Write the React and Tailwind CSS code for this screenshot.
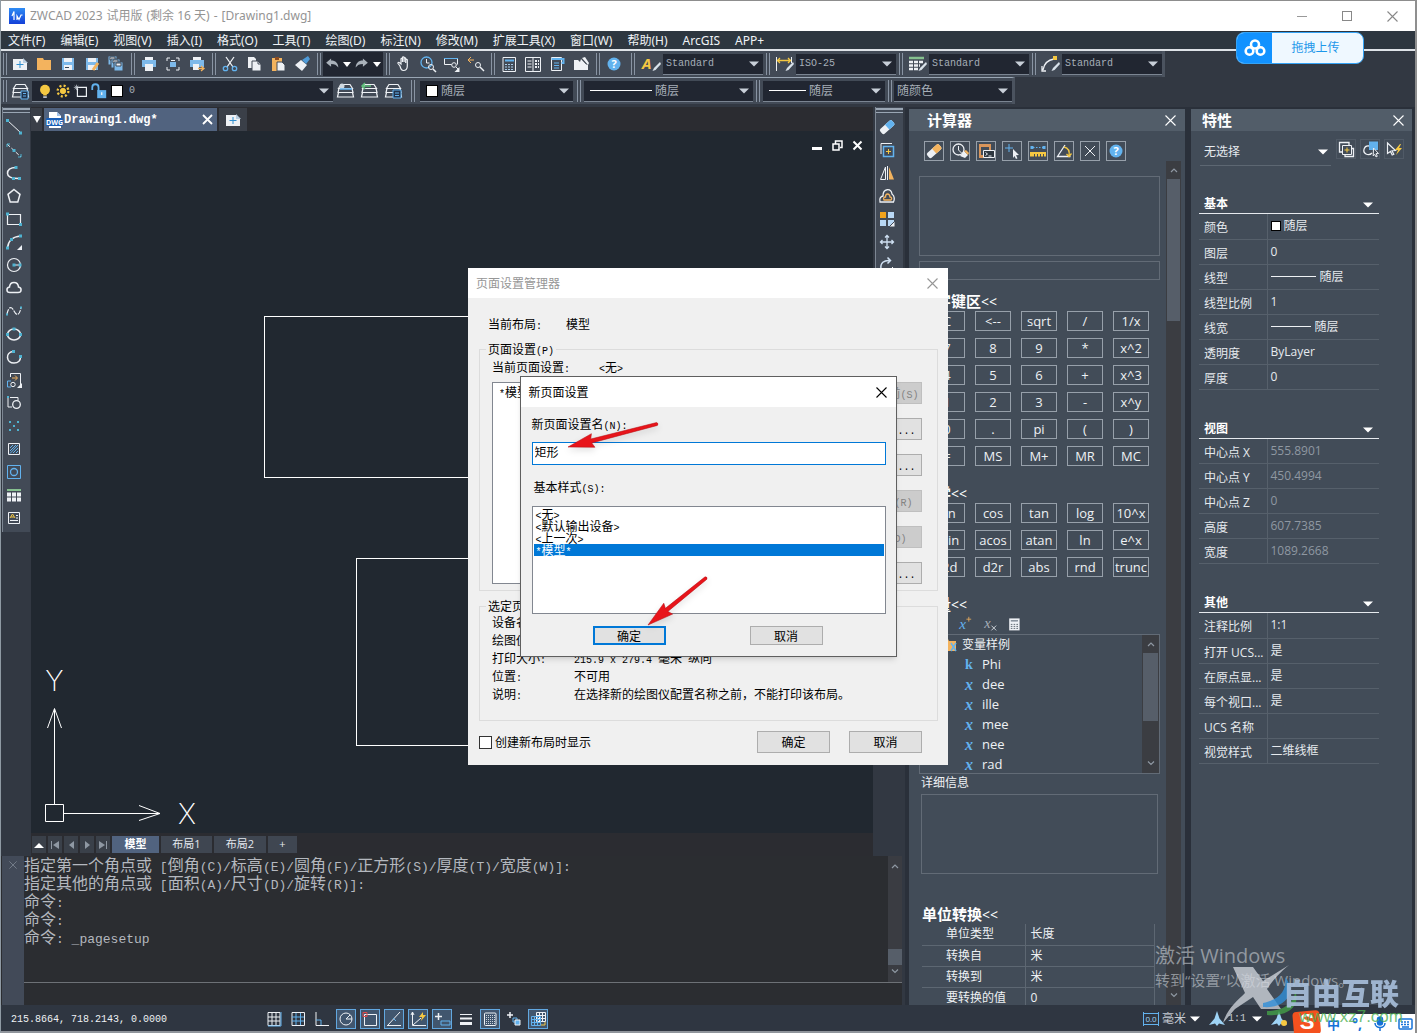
import React from "react";

/* ---------- shared helpers ---------- */

const W = "#eef1f5";
const B = "#62b2ee";
const C = "#4fb3d1";
const O = "#f3b35e";
const Y = "#f5c842";

function Icon({ children, s = 20, className = "" }) {
  return (
    <svg width={s} height={s} viewBox="0 0 20 20" fill="none" stroke={W} strokeWidth="1" className={"block shrink-0 " + className} aria-hidden="true">
      {children}
    </svg>
  );
}

function Tool({ icon, label, className = "w-6 h-6" }) {
  return (
    <button type="button" aria-label={label} className={"flex shrink-0 items-center justify-center " + className}>
      <Icon>{icon}</Icon>
    </button>
  );
}

/* Sets Latin runs in a narrow monospace beside the Chinese text. */
const LATIN = {
  sm: "font-['Liberation_Mono',monospace] text-[10px] leading-none",
  lg: "font-['Liberation_Mono',monospace] text-[13px] leading-none",
};
function T({ children, size = "sm" }) {
  return String(children)
    .split(/([\x20-\x7e]+)/)
    .filter(Boolean)
    .map((part, i) =>
      /^[\x20-\x7e]/.test(part) ? (
        <span key={i} className={"whitespace-pre " + LATIN[size]}>{part}</span>
      ) : (
        <span key={i}>{part}</span>
      )
    );
}

function Caret({ className = "text-[#dfe6ee]" }) {
  return (
    <svg width="10" height="6" viewBox="0 0 10 6" className={"block shrink-0 " + className} aria-hidden="true">
      <path d="M0 0.500H10L5 5.500Z" fill="currentColor" />
    </svg>
  );
}

function Close({ s = 11, className = "" }) {
  return (
    <svg width={s} height={s} viewBox="0 0 11 11" className={"block " + className} stroke="currentColor" strokeWidth="1.100" aria-hidden="true">
      <path d="M0.500 0.500L10.500 10.500M10.500 0.500L0.500 10.500" />
    </svg>
  );
}

const dots = (pts, c = C, r = 1.5) => pts.map(([x, y], i) => <rect key={i} x={x - r} y={y - r} width={r * 2} height={r * 2} fill={c} stroke="none" />);

/* ---------- icons ---------- */

const magnifier = <g><circle cx="13" cy="13" r="2.500" /><path d="M15 15l3 3" strokeWidth="1.500" /></g>;
const stack = <path d="M6 3.500h9l2.500 4h-14zM4 7.500l-1 4h15l-1-4M3.500 11.500l-1 4.500h16l-1-4.500" strokeWidth="1.200" />;
const pen = <path d="M19 8l-6 6-1.500 3 3-1L20 10z" fill="#d9e2ea" stroke="none" />;

const I = {
  newDoc: <g><path d="M3 5h10l4 4v7H3z" fill={W} stroke="none" /><path d="M13 4v5h5z" fill="#b8cde0" stroke="none" /><path d="M10 7v7M6.500 10.500h7" stroke="#2f8fd0" /></g>,
  open: <path d="M3 4h6l1 2h7v10H3z" fill={O} stroke="none" />,
  save: <g><path d="M4 4h12v12H4z" fill="#7db9ea" stroke="none" /><path d="M6 4h8v4H6zM6 11h8v5H6z" fill={W} stroke="none" /><path d="M7 13.500h4" stroke="#345" /></g>,
  saveAs: <g><path d="M4 4h12v12H4z" fill="#7db9ea" stroke="none" /><path d="M6 4h8v4H6zM6 11h8v5H6z" fill={W} stroke="none" /><path d="M16 9l-5 7" stroke={O} strokeWidth="3" /></g>,
  saveAll: <g stroke="#424a56">{[[2, 2], [5, 5], [8, 8]].map(([x, y]) => <g key={x}><path d={`M${x} ${y}h9v9h-9z`} fill="#7db9ea" /><path d={`M${x + 2} ${y + 1}h5v3h-5z`} fill={W} /></g>)}</g>,
  print: <g stroke="none"><path d="M6 3h8v4H6z" fill={W} /><path d="M3 6h14v7H3z" fill="#7db9ea" /><path d="M6 10h8v7H6z" fill={W} /></g>,
  preview: <g><path d="M4 7V4h3M13 4h3v3M16 13v3h-3M7 16H4v-3" /><path d="M7 8h6v5H7z" fill="#7db9ea" stroke="none" /><path d="M8 6.500h4" /></g>,
  publish: <g stroke="none"><path d="M6 3h8v4H6z" fill={W} /><path d="M3 6h14v7H3z" fill="#7db9ea" /><path d="M6 10h6v6H6z" fill={W} /><path d="M11 14.500h5M14 12l3 2.500-3 2.500" stroke={O} strokeWidth="1.300" /></g>,
  cut: <g strokeWidth="1.300"><path d="M6 3l7 10M14 3L7 13" stroke={W} /><circle cx="5.500" cy="14.500" r="2.200" stroke={B} /><circle cx="14.500" cy="14.500" r="2.200" stroke={B} /></g>,
  copy: <g><path d="M4 3h6l2 2v9H4z" fill={W} stroke="none" /><path d="M8 7h6l3 3v7H8z" fill={W} stroke="#424a56" /><path d="M14 7v3h3" stroke="#424a56" /></g>,
  paste: <g><path d="M4 4h10v13H4z" fill={O} stroke="none" /><path d="M7 3h4v3H7z" fill="#8a4b22" stroke="none" /><path d="M9 8h5l3 3v6H9z" fill={W} stroke="#424a56" /></g>,
  brush: <g stroke="none"><path d="M3 11l6-5 6 5-5 6z" fill={W} /><path d="M10 6l6-4 2 3-4 5z" fill="#4f9bd8" /></g>,
  undo: <path d="M9 4L3.500 8.500 9 13v-3c4 0 6 1 8 4 0-5-3-8-8-8z" fill="#aab2bb" stroke="none" />,
  redo: <path d="M11 4l5.500 4.500L11 13v-3c-4 0-6 1-8 4 0-5 3-8 8-8z" fill="#aab2bb" stroke="none" />,
  pan: <path d="M6 12L4 9.500c-.5-1 .8-1.600 1.500-.8L7 10V5c0-1 1.500-1 1.500 0v3-4.500c0-1 1.600-1 1.600 0V8 4.500c0-1 1.600-1 1.600 0V9 6c0-1 1.600-1 1.600 0v6c0 3-1.500 4.500-4 4.500S7 15 6 12z" strokeWidth="1.200" />,
  zoomRt: <g><circle cx="8.500" cy="8.500" r="5.500" stroke={B} strokeWidth="1.300" /><path d="M8.500 5v4h3" />{magnifier}</g>,
  zoomWin: <g><path d="M2.500 4.500h13v6M2.500 4.500v6h7" /><path d="M2 4.500h14" stroke={B} /><circle cx="12" cy="11" r="2.300" /><path d="M14 13l2 2" /><path d="M17.500 13v5h-5z" fill={W} stroke="none" /></g>,
  zoomPrev: <g><path d="M2 6h6M5 3L2 6l3 3" stroke={O} /><circle cx="12" cy="11" r="2.500" /><path d="M14 13l4 4" strokeWidth="1.400" /></g>,
  calc: <g><path d="M4 3.500h12.500v14H4z" /><path d="M6 6.500h9" stroke={B} strokeWidth="2" /><path d="M6 10.500h9M6 13h9M6 15.500h9" stroke="#a9cdea" strokeDasharray="2 1" /></g>,
  designCtr: <g><path d="M2.500 3.500h15v14h-15zM10 3.500v14" /><path d="M4.500 7h4M4.500 10h4M4.500 13h4" /><path d="M12 7h4M12 10h4M12 13h4" strokeDasharray="2 1" strokeWidth="2" /></g>,
  toolPal: <g><path d="M4.500 3.500h10v13h-10z" /><path d="M4.500 5h12v4h-2" stroke={B} strokeWidth="2" /><path d="M7 9h5M7 11.500h5M7 14h5" stroke={B} /></g>,
  eraseDoc: <g stroke="none"><path d="M3 6h4l2 2 1-3 5 5 2 1v5H3z" fill={W} /><path d="M11 4l3-1 4 6-1 2z" fill={W} /><path d="M10.500 4.500l5 6" stroke="#424a56" strokeWidth=".8" /></g>,
  help: <g><circle cx="10" cy="10" r="6.500" fill={B} stroke="none" /><text x="10" y="14" textAnchor="middle" fontSize="11" fontWeight="bold" fill="#fff" stroke="none">?</text></g>,
  textStyle: <g><text x="1" y="15" fontSize="15" fontWeight="bold" fontStyle="italic" fill={Y} stroke="none">A</text>{pen}</g>,
  dimStyle: <g><path d="M2.500 3v14M17.500 3v6" /><path d="M3 6.500h14M6 4L3.500 6.500 6 9M14 4l2.500 2.500L14 9" stroke={Y} strokeWidth="1.300" />{pen}</g>,
  tableStyle: <g><path d="M2 4h15" stroke="#86c08f" strokeWidth="2.500" /><path d="M2 8h14M2 11.500h11M2 15h9" stroke={W} strokeWidth="2.500" strokeDasharray="4 1" />{pen}</g>,
  leaderStyle: <g><path d="M3 16c1-6 4-10 11-11M2 12v5h4" strokeWidth="1.300" /><path d="M13 2h4v4h-4z" fill={Y} stroke="none" />{pen}</g>,
  layers: <g>{stack}<path d="M11 10h7v8h-7z" fill="#23334a" stroke={B} /><path d="M13 12.500h3M13 15h3" stroke={B} /></g>,
  bulb: <g stroke="none"><circle cx="10" cy="8.500" r="5.500" fill={Y} /><path d="M8 13h4v2H8z" fill={Y} /><path d="M8 16h4v1.500H8z" fill={W} /></g>,
  sun: <g stroke={Y}><circle cx="10" cy="10" r="3" fill={Y} /><circle cx="10" cy="10" r="6" strokeWidth="2.500" strokeDasharray="2.300 2.400" /></g>,
  frame: <g><path d="M6 6h10v10H6z" strokeWidth="1.300" /><path d="M2 6h6M5 3v6M3 4l4 4M7 4L3 8" stroke="#c5ccd4" strokeWidth=".8" /></g>,
  lock: <g><path d="M8 9h10v9H8z" fill={B} stroke="none" /><path d="M9.500 10V6a3.500 3.500 0 00-7 0v3" stroke={B} strokeWidth="2" /><path d="M13 11.500v3" strokeWidth="1.500" /></g>,
  layA: <g>{stack}<circle cx="7" cy="5" r="2.500" fill="#cfd8e0" stroke="none" /><path d="M5 8h12" stroke={B} strokeWidth="1.500" /></g>,
  layB: <g>{stack}<path d="M3 5h9M6 2L3 5l3 3" stroke="#5ec07a" strokeWidth="1.500" /></g>,
  layC: <g>{stack}<path d="M10 9h8v8h-8z" fill="#23334a" stroke={B} /><path d="M12 12h4M12 14.500h4" stroke={B} /></g>,
  line: <g><path d="M3.500 3.500l13 12" />{dots([[3.500, 3.500], [16.500, 16]])}</g>,
  xline: <g><path d="M3 4l14 13" strokeDasharray="4 2" /><path d="M3 7V4h3M17 14v3h-3" stroke={C} />{dots([[10, 10.500]])}</g>,
  pline: <g><path d="M12 4.500C6 4.500 3.500 7 3.500 10.500S7 15.500 15 15.500" strokeWidth="1.500" />{dots([[12, 4.500], [9.500, 15.500], [15.500, 15.500]])}</g>,
  polygon: <path d="M10 3.500l6 4.800-2.200 7.700H6.200L4 8.300z" strokeWidth="1.500" />,
  rect: <g><path d="M3.500 5.500h13v10h-13z" strokeWidth="1.200" />{dots([[3.500, 5], [16.500, 15.500]])}</g>,
  arc: <g><path d="M3.500 16C4 9 9 4.500 16.500 4" strokeWidth="1.500" />{dots([[3.500, 16], [7.500, 7.500], [16.500, 4]])}<path d="M18 13v5h-5z" fill={W} stroke="none" /></g>,
  circle: <g><circle cx="10" cy="10" r="6.500" strokeWidth="1.200" /><path d="M10 10h6" />{dots([[10, 10], [16, 10]])}</g>,
  cloud: <path d="M6 14.500c-4 0-4-5-.5-5.500C6 3 14 3 14.500 9c3.500.5 3.500 5.500-.5 5.500z" strokeWidth="1.500" />,
  spline: <g><path d="M3 13c2-9 5-7 7-3s5 6 7-3" strokeWidth="1.200" strokeDasharray="5 1" />{dots([[3, 13.500], [17, 6.500]], C, 1)}</g>,
  ellipse: <g><ellipse cx="10" cy="10.500" rx="6.500" ry="5.500" strokeWidth="1.500" />{dots([[10, 5], [3.500, 10.500], [16.500, 10.500]])}</g>,
  ellArc: <g><path d="M9 4.500c-8 1-7 11.500 1 11.500 4.500 0 6.500-3 6.500-6" strokeWidth="1.500" />{dots([[9.500, 4.500], [16.500, 9.500]])}</g>,
  insert: <g><path d="M6.500 7V3.500h10v12" /><path d="M7 11H3.500v6H7" stroke={B} /><path d="M8 8h5M11 5.500L13.500 8 11 10.500" stroke={O} /><circle cx="9" cy="14.500" r="2.200" /><path d="M18 13v5h-5z" fill={W} stroke="none" /></g>,
  block: <g><path d="M4 5v9h4M6 4.500h8v3" /><circle cx="12.500" cy="11.500" r="3.800" strokeWidth="1.300" />{dots([[4, 4]], C, 1)}</g>,
  points: <g>{dots([[6, 6], [14, 6], [10, 10], [6, 14], [14, 14]], C, 1)}</g>,
  hatch: <g><path d="M4.500 4.500h11v11h-11z" /><path d="M6 9l3-3M6 12l6-6M6 14.500L14 6M9 14l5-5M12 14l2-2" stroke={B} /></g>,
  region: <g stroke={B}><path d="M3.500 3.500h13v13h-13z" /><circle cx="10" cy="10" r="3.500" strokeWidth="1.300" /></g>,
  table: <g><path d="M3 5h14" stroke="#86c08f" strokeWidth="2" /><path d="M3 9.500h14M3 14.500h14" strokeWidth="4" strokeDasharray="4 1" /></g>,
  mtext: <g><path d="M4.500 4.500h11v11h-11z" /><path d="M6 10l2.500-4L11 10M7 9h3" stroke={Y} /><path d="M12 7.500h2M12 10h2M6 12.500h8" /></g>,
  erase: <g stroke="none" transform="rotate(-42 10 10)"><rect x="2" y="7" width="16" height="6.500" rx="2" fill={W} /><path d="M10 7h6a2 2 0 012 2v2.500a2 2 0 01-2 2h-6z" fill={B} /></g>,
  eraseO: <g stroke="none" transform="rotate(-42 10 10)"><rect x="2" y="7" width="16" height="6.500" rx="2" fill={W} /><path d="M10 7h6a2 2 0 012 2v2.500a2 2 0 01-2 2h-6z" fill={O} /></g>,
  copyObj: <g><path d="M4 14V3.500h11" /><path d="M6.500 6.500h10v10h-10z" stroke={B} strokeWidth="1.500" /><path d="M11.500 9v5M9 11.500h5" stroke={Y} /></g>,
  mirror: <g><path d="M8.500 4v12.500H3.500z" /><path d="M10.500 3v14" /><path d="M12 4v12.500h5z" fill={O} stroke="none" /></g>,
  offset: <g strokeWidth="1.300"><path d="M3 16c-1-4 1-5.500 3-6 0-8 8-8 9-2 3 2 2.500 6 1.500 8z" /><path d="M7 14c-1-2 0-3 1.500-3 0-4 4-4 4.500 0 2 0 2 2 1 3z" stroke={O} /></g>,
  array: <g stroke="none"><path d="M3 3h6v6H3z" fill="#f2a31c" /><path d="M11 3h6v6h-6zM3 11h6v6H3zM11 11h6v6h-6z" fill="#b9d8f5" /><path d="M18 12v6h-6z" fill={W} stroke="#424a56" /></g>,
  move: <path d="M10 4v12M4 10h12M8 5.500L10 3.500l2 2M8 14.500l2 2 2-2M5.500 8l-2 2 2 2M14.500 8l2 2-2 2" stroke="#cfe0f2" strokeWidth="1.300" />,
  rotate: <g><path d="M4 14C3 8 7 5 13 5.500M10.500 2.500l3 3-3 3" strokeWidth="1.500" stroke="#cfe0f2" /><path d="M13 15l3-3" /></g>,
  history: <g><circle cx="8.500" cy="8.500" r="5.500" strokeWidth="1.300" /><path d="M8.500 5v4l3 3" /><path d="M10 15l4-5 4 4-3 3z" fill={W} stroke="none" /><path d="M14 10l4 4 1-2-3-3z" fill={O} stroke="none" /></g>,
  pasteCmd: <g><path d="M3 3h12v14H3z" fill="#d9955a" stroke="none" /><path d="M5 6h8v8H5z" fill="#424c58" stroke="none" /><path d="M7.500 9.500h11v7h-11z" fill="#2e3740" /><path d="M9.500 11.500l2 1.500-2 1.500M12.500 15h3" /></g>,
  pick: <g><path d="M3 7h8M7 3v8" stroke={B} /><path d="M11 8l6 6-3 .3 1.500 3-1.500.7-1.500-3-1.500 2z" fill={W} stroke="none" /></g>,
  dist: <g><path d="M5 6.500h10" stroke={B} strokeDasharray="1.500 1.500" />{dots([[4, 6.500], [16, 6.500]], B)}<path d="M2 15.500V11h16v4.500h-2V13h-1v2.500h-2V13h-1v2.500h-2V13H9v2.500H7V13H6v2.500z" fill={Y} stroke="none" /></g>,
  angle: <g><path d="M11 4L3.500 15.500h13" strokeWidth="1.300" /><path d="M10 6c4 1 6 4 5 9M12.500 13l2.500 2.500 2.500-3" stroke={Y} strokeWidth="1.300" /></g>,
  cross: <path d="M5 5l10 10M15 5L5 15" />,
  addSel: <g><path d="M6 13H3.500V3.500H13V6" strokeWidth="1.300" /><path d="M6.500 6.500h9v9h-9z" /><path d="M15 9.500h2.500v8H9V15" strokeWidth="1.300" /><path d="M11 8.500v5M8.500 11h5" stroke={Y} /></g>,
  selObj: <g><path d="M9 7c-5-1-7 6-3 8 2 1 4 1 6-1" strokeWidth="1.300" /><path d="M9 2.500h9V11H9z" fill={B} stroke="none" /><path d="M13.500 9l5 5.500-2.500.2 1.300 2.600-1.300.6-1.300-2.500-1.500 1.500z" fill="#424c58" /></g>,
  quick: <g><path d="M3.500 4l8 7.500-3.500.2 1.800 3.600-1.600.7-1.700-3.500-3 2z" strokeWidth="1.200" /><path d="M16 5l-5 6h3l-2 5 6-7h-3l2-4z" fill={Y} stroke="none" /></g>,
};

/* ---------- top bars ---------- */

const menus = ["文件(F)", "编辑(E)", "视图(V)", "插入(I)", "格式(O)", "工具(T)", "绘图(D)", "标注(N)", "修改(M)", "扩展工具(X)", "窗口(W)", "帮助(H)", "ArcGIS", "APP+"];

function TitleBar() {
  return (
    <header className="flex h-[31px] shrink-0 items-center border-t border-[#8d8d8d] bg-white pl-2 font-['Noto_Sans','Noto_Sans_CJK_SC',sans-serif] text-[#949494]">
      <svg width="16" height="16" viewBox="0 0 16 16" aria-hidden="true">
        <defs><linearGradient id="lg" x1="0" y1="0" x2="0" y2="1"><stop offset="0" stopColor="#2f8cf4" /><stop offset="1" stopColor="#1440d8" /></linearGradient></defs>
        <rect width="16" height="16" fill="url(#lg)" />
        <path d="M3 8l2-4.500 0 5.500M5 9v3M8 12V8l2 3.500L12 7h1.500" stroke="#fff" strokeWidth="1.200" fill="none" />
      </svg>
      <h1 className="ml-[5px] flex gap-1 text-xs"><span>ZWCAD 2023</span> <span>试用版</span> <span>(剩余 16 天)</span> <span>-</span> <span>[Drawing1.dwg]</span></h1>
      <div className="ml-auto flex">
        <button type="button" aria-label="最小化" className="flex h-7 w-[45px] items-center justify-center"><span className="h-px w-[10px] bg-[#999]" /></button>
        <button type="button" aria-label="最大化" className="flex h-7 w-[45px] items-center justify-center"><span className="size-[10px] border border-[#888]" /></button>
        <button type="button" aria-label="关闭" className="flex h-7 w-[46px] items-center justify-center text-[#888]"><Close /></button>
      </div>
    </header>
  );
}

function MenuBar() {
  return (
    <nav className="flex h-5 shrink-0 items-center gap-px border-b-2 border-[#dfe3e8] bg-[#2e3740] font-['Noto_Sans','Noto_Sans_CJK_SC',sans-serif] text-xs text-[#f0f3f6]">
      {menus.map((m) => (
        <button type="button" key={m} className="shrink-0 px-[7px] pt-[2px] leading-[18px]">{m}</button>
      ))}
    </nav>
  );
}

const Sep = ({ className = "w-[9px]" }) => (
  <span className={"flex shrink-0 items-stretch justify-center gap-[2px] self-stretch py-[2px] " + className}>
    <span className="w-px bg-[#8994a3]" />
    <span className="w-px bg-[#8994a3]" />
  </span>
);

function Combo({ label, text, className = "", before, mono }) {
  return (
    <div className={"flex h-[21px] shrink-0 items-center border-b border-[#7b8592] bg-[#212631] pr-1 text-[#a6aeb8] " + className}>
      {before}
      <select aria-label={label} className={"min-w-0 flex-1 appearance-none bg-transparent px-[3px] leading-5 outline-none " + (mono ? "font-['Liberation_Mono',monospace] text-[10px]" : "text-xs")}>
        <option>{text}</option>
      </select>
      <Caret className="pointer-events-none text-[#c8cfd8]" />
    </div>
  );
}

const tools = (list) => list.map((k) => <Tool key={k} label={k} icon={I[k]} />);

function Toolbars() {
  return (
    <div className="flex shrink-0 flex-col items-start bg-[#323842] pb-[3px]">
      <div className="flex h-[26px] items-center border-r-[3px] border-[#4b535f] bg-[#424a56]">
        <Sep className="w-[7px]" />
        {tools(["newDoc", "open", "save", "saveAs", "saveAll"])}
        <Sep />
        {tools(["print", "preview", "publish"])}
        <Sep />
        {tools(["cut", "copy", "paste", "brush"])}
        <Sep />
        <div className="flex h-6 w-[60px] items-center justify-center bg-[#212631]">
          <button type="button" aria-label="undo"><Icon s={18}>{I.undo}</Icon></button>
          <svg width="8" height="5" viewBox="0 0 10 6" className="mx-0.5" aria-hidden="true"><path d="M0 0h10L5 6z" fill="#fff" /></svg>
          <button type="button" aria-label="redo"><Icon s={18}>{I.redo}</Icon></button>
          <svg width="8" height="5" viewBox="0 0 10 6" className="mx-0.5" aria-hidden="true"><path d="M0 0h10L5 6z" fill="#fff" /></svg>
        </div>
        <Sep />
        {tools(["pan", "zoomRt", "zoomWin", "zoomPrev"])}
        <Sep />
        {tools(["calc", "designCtr", "toolPal", "eraseDoc"])}
        <Sep />
        {tools(["help"])}
        <Sep className="w-[13px]" />
        {tools(["textStyle"])}
        <Combo label="文字样式" text="Standard" mono className="w-[100px]" />
        <Sep />
        {tools(["dimStyle"])}
        <Combo label="标注样式" text="ISO-25" mono className="w-[100px]" />
        <Sep />
        {tools(["tableStyle"])}
        <Combo label="表格样式" text="Standard" mono className="w-[100px]" />
        <Sep />
        {tools(["leaderStyle"])}
        <Combo label="引线样式" text="Standard" mono className="w-[100px]" />
      </div>
      <div className="flex h-[27px] items-center border-r-[3px] border-t border-r-[#4b535f] border-t-[#9aa6b4] bg-[#424a56]">
        <Sep className="w-[7px]" />
        {tools(["layers"])}
        <Combo
          label="图层" text="0" mono className="w-[301px]"
          before={
            <>
              <Icon s={18} className="ml-1">{I.bulb}</Icon>
              <Icon s={18}>{I.sun}</Icon>
              <Icon s={18}>{I.frame}</Icon>
              <Icon s={18}>{I.lock}</Icon>
              <span className="mx-[3px] size-3 shrink-0 border border-black bg-white" />
            </>
          }
        />
        {tools(["layA", "layB", "layC"])}
        <Sep className="w-[15px]" />
        <Combo label="颜色" text="随层" className="w-[153px]" before={<span className="ml-[6px] size-3 shrink-0 border border-black bg-white" />} />
        <Sep className="w-[11px]" />
        <Combo label="线型" text="随层" className="w-[169px]" before={<span className="ml-[6px] h-px w-[62px] shrink-0 bg-white" />} />
        <Sep className="w-[10px]" />
        <Combo label="线宽" text="随层" className="w-[122px]" before={<span className="ml-[6px] h-px w-[37px] shrink-0 bg-white" />} />
        <Sep className="w-[9px]" />
        <Combo label="打印样式" text="随颜色" className="w-[118px]" />
      </div>
    </div>
  );
}

/* ---------- drawing area ---------- */

function SideBar({ list, className = "w-[28px]" }) {
  return (
    <div className={"flex flex-col items-start border-l border-[#7d8793] bg-[#424a56] pb-[3px] " + className}>
      <span className="mt-px h-[2px] w-full shrink-0 bg-[#9aa6b4]" />
      <span className="mb-[2px] mt-[2px] h-px w-full shrink-0 bg-[#9aa6b4]" />
      {list.map((k) => <Tool key={k} label={k} icon={I[k]} className="h-[23px] w-[22px]" />)}
    </div>
  );
}

function Canvas() {
  return (
    <div className="relative min-h-0 flex-1 overflow-hidden bg-[#212830]">
      <svg className="absolute left-0 top-0 h-full w-full" fill="none" stroke="#fff" aria-hidden="true">
        <rect x="233.500" y="185.500" width="420" height="161" />
        <rect x="325.500" y="427.500" width="400" height="187" />
      </svg>
      <svg className="absolute bottom-0 left-0" width="180" height="170" viewBox="0 0 180 170" fill="none" stroke="#fff" aria-hidden="true">
        <path d="M14.500 141.500h18v17h-18zM23.500 141V46M33 150.500h96M16.500 65L23.500 45.500 30.500 65M108 142.500l21 8-21 7" />
        <text x="23.500" y="28" textAnchor="middle" fontSize="28" fontWeight="200" fill="#fff" stroke="none" className="font-['Inter',sans-serif]">Y</text>
        <text x="156" y="161" textAnchor="middle" fontSize="28" fontWeight="200" fill="#fff" stroke="none" className="font-['Inter',sans-serif]">X</text>
      </svg>
      <div className="flex items-center justify-end gap-[9px] pr-[10px] pt-2 text-white">
        <button type="button" aria-label="最小化窗口" className="flex h-3 w-[11px] items-end pb-px"><span className="h-[3px] w-[10px] bg-white" /></button>
        <button type="button" aria-label="还原窗口"><svg width="11" height="11" viewBox="0 0 11 11" fill="none" stroke="#fff" strokeWidth="1.500"><path d="M1 4h6v6H1zM3.500 3.500V1H10v6.500H8" /></svg></button>
        <button type="button" aria-label="关闭窗口"><svg width="11" height="11" viewBox="0 0 11 11" stroke="#fff" strokeWidth="2"><path d="M1.500 1.500l8 8M9.500 1.500l-8 8" /></svg></button>
      </div>
    </div>
  );
}

function DrawingArea() {
  return (
    <div className="flex min-h-0 flex-1">
      <div className="w-[30px] shrink-0 bg-[#323842] pl-px">
        <SideBar list={["line", "xline", "pline", "polygon", "rect", "arc", "circle", "cloud", "spline", "ellipse", "ellArc", "insert", "block", "points", "hatch", "region", "table", "mtext"]} />
      </div>
      <div className="flex min-w-0 flex-1 flex-col">
        <div className="flex h-6 shrink-0 items-stretch gap-[2px] bg-[#2b2c31] pt-px">
          <button type="button" aria-label="文档列表" className="flex w-[11px] items-center justify-center bg-[#3a3f48]">
            <svg width="8" height="7" viewBox="0 0 8 7" aria-hidden="true"><path d="M0 0h8L4 7z" fill="#fff" /></svg>
          </button>
          <div className="flex w-[173px] items-center bg-[#51637f] pl-[2px] pr-1 text-white">
            <svg width="18" height="16" viewBox="0 0 18 16" aria-hidden="true">
              <path d="M3 0h8l4 4v12H3z" fill="#fff" /><path d="M11 0v4h4z" fill="#9fc0e8" />
              <rect y="6" width="17" height="8" rx="1" fill="#1a5fb8" />
              <text x="8.500" y="12.500" fontSize="7" fontWeight="bold" textAnchor="middle" fill="#fff">DWG</text>
            </svg>
            <span className="font-['Liberation_Mono',monospace] text-xs font-bold">Drawing1.dwg*</span>
            <button type="button" aria-label="关闭文档" className="ml-auto"><svg width="11" height="11" viewBox="0 0 11 11" stroke="#fff" strokeWidth="1.800"><path d="M1 1l9 9M10 1l-9 9" /></svg></button>
          </div>
          <Tool label="新建文档" icon={I.newDoc} className="w-[28px] bg-[#3a3f48]" />
        </div>
        <Canvas />
        <div className="flex h-[23px] shrink-0 items-stretch gap-[2px] bg-[#2b2c31] py-[3px] pl-px text-[11px] text-[#e3e8ee]">
          {["M2 9L7 4l5 5z", "M3 2h1v8H3zM11 2v8L5 6z", "M10 2v8L5 6z", "M5 2v8l5-4z", "M3 2v8l6-4zM10 2h1v8h-1z"].map((d, i) => (
            <button type="button" key={d} aria-label={"布局导航 " + (i + 1)} className="flex w-[14px] items-center justify-center bg-[#3a4049]">
              <svg width="14" height="12" viewBox="0 0 14 12" aria-hidden="true"><path d={d} fill={i === 0 ? "#fff" : "#8f98a3"} /></svg>
            </button>
          ))}
          <button type="button" className="w-[47px] bg-[#51637f] font-bold text-white">模型</button>
          <button type="button" className="w-[51px] bg-[#3f4651]">布局1</button>
          <button type="button" className="w-[52px] bg-[#3f4651]">布局2</button>
          <button type="button" className="w-[29px] bg-[#3f4651]">+</button>
        </div>
      </div>
      <div className="w-[32px] shrink-0 bg-[#323842] pl-[2px]">
        <SideBar className="h-[640px] w-[28px]" list={["erase", "copyObj", "mirror", "offset", "array", "move", "rotate"]} />
      </div>
    </div>
  );
}

const Chevron = ({ down }) => (
  <svg width="8" height="5" viewBox="0 0 8 5" fill="none" stroke="#8f98a3" strokeWidth="1.200" aria-hidden="true"><path d={down ? "M1 0.500L4 3.500 7 0.500" : "M1 4L4 1 7 4"} /></svg>
);

const log = ["指定第一个角点或 [倒角(C)/标高(E)/圆角(F)/正方形(S)/厚度(T)/宽度(W)]:", "指定其他的角点或 [面积(A)/尺寸(D)/旋转(R)]:", "命令:", "命令:", "命令: _pagesetup"];

function CommandPanel() {
  return (
    <section aria-label="命令" className="flex h-[149px] shrink-0 bg-[#2b2d31] pl-[1px]">
      <div className="flex w-[22px] shrink-0 justify-center bg-[#424a58] pt-1"><Close s={8} className="mt-px text-[#7f8894]" /></div>
      <div className="flex min-w-0 flex-1 flex-col">
        <div className="flex min-h-0 flex-1">
          <div className="min-w-0 flex-1 whitespace-nowrap text-base leading-[18px] text-[#b4b8bf]">
            {log.map((l, i) => <p key={i}><T size="lg">{l}</T></p>)}
          </div>
          <div className="flex w-[14px] flex-col items-center bg-[#3a3c42] py-2">
            <Chevron />
            <span className="mb-[4px] mt-auto h-4 w-full bg-[#565e69]" />
            <Chevron down />
          </div>
        </div>
        <input aria-label="命令行" className="h-[23px] w-full border-t border-[#6d7176] bg-transparent text-sm text-[#b4b8bf] outline-none" />
      </div>
      <span className="w-[3px] bg-[#323842]" />
    </section>
  );
}

/* ---------- calculator ---------- */

function PanelHead({ children, className = "" }) {
  return (
    <div className={"flex h-[22px] shrink-0 items-center justify-between bg-[#525d69] text-white " + className}>
      <h2 className="text-[15px] font-bold leading-5">{children}</h2>
      <button type="button" aria-label={"关闭" + children}><Close /></button>
    </div>
  );
}

const Heading = ({ children, className }) => <h3 className={"h-5 text-[15px] font-bold leading-5 text-white " + className}>{children}<span className="text-sm font-normal leading-none">&lt;&lt;</span></h3>;

function Keys({ keys }) {
  return (
    <div className="grid grid-cols-[repeat(5,36px)] gap-x-[10px] gap-y-[7px] pl-[10px]">
      {keys.map((k) => (
        <button type="button" key={k} className="h-5 whitespace-nowrap border border-[#97a0aa] text-center text-[13px] leading-[17px] text-[#eef1f4]">{k}</button>
      ))}
    </div>
  );
}

const numKeys = ["C", "<--", "sqrt", "/", "1/x", "7", "8", "9", "*", "x^2", "4", "5", "6", "+", "x^3", "1", "2", "3", "-", "x^y", "0", ".", "pi", "(", ")", "=", "MS", "M+", "MR", "MC"];
const sciKeys = ["sin", "cos", "tan", "log", "10^x", "asin", "acos", "atan", "ln", "e^x", "r2d", "d2r", "abs", "rnd", "trunc"];
const varGlyph = "w-4 text-center font-['Liberation_Serif',serif] font-bold leading-5 text-[#62b2ee]";

function Calculator() {
  return (
    <section aria-label="计算器" className="flex w-[276px] shrink-0 flex-col bg-[#424c58]">
      <PanelHead className="pl-[18px] pr-[9px]">计算器</PanelHead>
      <div className="flex h-[30px] shrink-0 items-end gap-[6px] pl-[15px]">
        {["eraseO", "history", "pasteCmd", "pick", "dist", "angle", "cross", "help"].map((k) => (
          <button type="button" key={k} aria-label={k} className="flex size-5 items-center justify-center border border-[#97a0aa]"><Icon>{I[k]}</Icon></button>
        ))}
      </div>
      <div className="flex min-h-0 flex-1 overflow-hidden pl-[10px] pr-1">
        <div className="min-h-0 flex-1 overflow-hidden pr-[6px] pt-[15px] text-xs text-[#eef1f4]">
          <textarea aria-label="历史记录" className="block h-20 w-full resize-none border border-[#626b76] bg-transparent outline-none" />
          <input aria-label="表达式" className="mt-[5px] block h-[19px] w-full border border-[#626b76] bg-transparent outline-none" />
          <Heading className="mt-[11px] pl-[2px]">数字键区</Heading>
          <Keys keys={numKeys} />
          <Heading className="mt-[17px] pl-[2px]">科学</Heading>
          <Keys keys={sciKeys} />
          <Heading className="mt-[17px] pl-[2px]">变量</Heading>
          <div className="flex h-5 items-center gap-[9px] pl-[37px]">
            <button type="button" aria-label="新建变量" className="w-4"><Icon s={16}><text x="4" y="16" fontSize="19" fontStyle="italic" fill={B} stroke="none" className="font-['Liberation_Serif',serif]">x</text><path d="M16 1v6M13 4h6" stroke={O} /></Icon></button>
            <button type="button" aria-label="删除变量" className="w-4"><Icon s={16}><text x="4" y="15" fontSize="18" fontStyle="italic" fill="#a6aeb8" stroke="none" className="font-['Liberation_Serif',serif]">x</text><path d="M13 12l6 6M19 12l-6 6" /></Icon></button>
            <button type="button" aria-label="返回计算器" className="w-4"><Icon s={16}><path d="M4 3h13v15H4z" fill={W} stroke="none" /><path d="M6 6h9" stroke="#8a949f" strokeWidth="2" /><path d="M6 10.500h9M6 13h9M6 15.500h9" stroke="#424c58" strokeDasharray="2 1.500" /></Icon></button>
          </div>
          <div className="flex h-[140px] overflow-hidden border border-[#626b76]">
            <ul className="flex-1">
              <li className="flex h-5 items-center pl-[22px]">
                <svg width="15" height="14" viewBox="0 0 15 14" className="mr-[5px]" aria-hidden="true"><path d="M0 1h6l1 2h7v10H0z" fill={O} /><path d="M9 5l5 8M14 5L9 13" stroke={B} strokeWidth="1.500" /></svg>
                变量样例
              </li>
              {["Phi", "dee", "ille", "mee", "nee", "rad"].map((v) => (
                <li key={v} className="flex h-5 items-center gap-[5px] pl-[41px] text-[13px]">
                  {v === "Phi" ? <span className={varGlyph + " text-sm"}>k</span> : <span className={varGlyph + " text-base italic"}>x</span>}
                  {v}
                </li>
              ))}
            </ul>
            <div className="flex w-[17px] flex-col items-center bg-[#3b3d42] py-[7px]">
              <Chevron /><span className="mt-[6px] h-[68px] w-[15px] bg-[#565e69]" /><span className="mt-auto"><Chevron down /></span>
            </div>
          </div>
          <label htmlFor="detail" className="block h-[18px] pl-[2px] leading-[18px]">详细信息</label>
          <textarea id="detail" className="ml-[2px] mt-[2px] block h-20 w-[calc(100%-4px)] resize-none border border-[#626b76] bg-transparent outline-none" />
          <Heading className="mt-[30px] pl-[3px]">单位转换</Heading>
          <table className="ml-[3px] w-[calc(100%-8px)] border-collapse">
            <tbody>
              {[["单位类型", "长度"], ["转换自", "米"], ["转换到", "米"], ["要转换的值", "0"]].map(([a, b]) => (
                <tr key={a} className="h-[21px] border-b border-[#5d6772]">
                  <th className="w-[103px] whitespace-nowrap border-r border-[#5d6772] pl-6 text-left font-normal leading-5">{a}</th>
                  <td className="border-r border-[#5d6772] pl-[5px] leading-5">{b}</td>
                </tr>
              ))}
            </tbody>
          </table>
        </div>
        <div className="flex w-[15px] flex-col items-center bg-[#3b3d42] py-[7px]">
          <Chevron />
          <span className="mt-[6px] h-[142px] w-[13px] shrink-0 bg-[#565e69]" />
          <span className="mt-auto"><Chevron down /></span>
        </div>
      </div>
    </section>
  );
}

/* ---------- properties ---------- */

const byLayer = (w) => (
  <span className="flex items-center gap-1"><span className={"h-px bg-[#eef1f4] " + w} />随层</span>
);

const groups = [
  { title: "基本", rows: [["颜色", <span className="flex items-center gap-[3px]"><span className="size-[10px] border border-black bg-white" />随层</span>], ["图层", "0"], ["线型", byLayer("w-[45px]")], ["线型比例", "1"], ["线宽", byLayer("w-[40px]")], ["透明度", "ByLayer"], ["厚度", "0"]] },
  { title: "视图", dim: true, rows: [["中心点 X", "555.8901"], ["中心点 Y", "450.4994"], ["中心点 Z", "0"], ["高度", "607.7385"], ["宽度", "1089.2668"]] },
  { title: "其他", rows: [["注释比例", "1:1"], ["打开 UCS...", "是"], ["在原点显...", "是"], ["每个视口...", "是"], ["UCS 名称", ""], ["视觉样式", "二维线框"]] },
];

function Properties() {
  return (
    <section aria-label="特性" className="flex w-[221px] shrink-0 flex-col overflow-hidden bg-[#424c58] text-xs text-[#e6eaee]">
      <PanelHead className="pl-[11px] pr-2">特性</PanelHead>
      <div className="flex h-[34px] items-start pl-[9px] pt-2">
        <div className="flex h-[27px] w-[131px] items-center border-b border-[#5d6772] pr-[3px]">
          <select aria-label="选择" className="flex-1 appearance-none bg-transparent pl-1 outline-none"><option>无选择</option></select>
          <Caret className="text-white" />
        </div>
        <div className="ml-[5px] flex gap-1">
          {["addSel", "selObj", "quick"].map((k) => (
            <button type="button" key={k} aria-label={k} className="flex size-5 items-center justify-center border border-[#505a66]"><Icon>{I[k]}</Icon></button>
          ))}
        </div>
      </div>
      {groups.map((g) => (
        <div key={g.title} className="ml-2 w-[180px]">
          <div className="flex h-[49px] items-end justify-between border-b border-[#e6eaee] pl-[5px] pr-[6px]">
            <h3 className="font-bold leading-[19px] text-white">{g.title}</h3>
            <Caret className="mb-[5px] text-white" />
          </div>
          <table className="w-full table-fixed border-collapse">
            <tbody>
              {g.rows.map(([a, b]) => (
                <tr key={a} className="h-[25px] border-b border-[#56606b]">
                  <th className="w-[68px] whitespace-nowrap border-r border-[#56606b] pl-[5px] pt-1 text-left font-normal leading-5">{a}</th>
                  <td className={"pl-[3px] leading-5 " + (g.dim ? "text-[#8f98a2]" : "")}>{b}</td>
                </tr>
              ))}
            </tbody>
          </table>
        </div>
      ))}
    </section>
  );
}

/* ---------- status bar ---------- */

const modes = [
  ["网格", 0, <g key="a"><path d="M4 3.500h12v13H4zM8 3.500v13M12 3.500v13M4 8h12M4 12h12" /><path d="M17 3v14H4" stroke={B} /></g>],
  ["捕捉", 0, <g key="b"><path d="M4 3.500h12.500v13H4z" /><path d="M8 4v12M12.500 4v12M4 8h12M4 12h12" stroke={B} /></g>],
  ["正交", 0, <g key="c"><path d="M4 3v13.500h13" /><path d="M4 11h5v5" stroke={B} /></g>],
  ["极轴", 1, <g key="d"><circle cx="10" cy="10" r="6" /><path d="M10 10h6M10 10l4-4" /></g>],
  ["对象捕捉", 1, <g key="e"><path d="M4.500 5.500h12v11h-12z" /><path d="M3 3.500h4v4H3z" stroke="#e04848" /></g>],
  ["追踪", 1, <g key="f"><path d="M3 16.500h14M4 16L16 3" /><path d="M9 9l3 3" stroke={B} /></g>],
  ["动态 UCS", 1, <g key="g"><path d="M4.500 3v13.500H18M3 6l1.500-3L6 6M5 16l8-7" /><path d="M15 3l-4 5h3l-1 4 5-6h-3z" fill={Y} stroke="none" /></g>],
  ["动态输入", 1, <g key="h"><path d="M3 7.500h7M6.500 4v7" strokeWidth="1.500" /><path d="M9 12h9v4H9z" stroke={B} /></g>],
  ["线宽", 0, <g key="i"><path d="M4 5.500h12" /><path d="M4 9.500h12" strokeWidth="2" /><path d="M4 14.500h12" strokeWidth="3" /></g>],
  ["透明度", 1, <g key="j"><rect x="4.500" y="4" width="11.500" height="12.500" rx="1" /><path d="M6 6.500h9M6 8.500h9M6 10.500h9M6 12.500h9M6 14.500h9" stroke="#ccd5dd" strokeDasharray="1 1" /></g>],
  ["选择循环", 0, <g key="k"><path d="M3 6h6M6 3v6" strokeWidth="1.500" /><path d="M9 9h4v4H9z" stroke={B} /><path d="M11 11h5v5h-5z" fill={B} /></g>],
  ["模型空间", 1, <g key="l"><path d="M8.500 3.500h9v9h-9zM11.500 3.500v9M14.500 3.500v9M8.500 6.500h9M8.500 9.500h9" /><path d="M3.500 7.500h9v9h-9zM6.500 7.500v9M9.500 7.500v9M3.500 10.500h9M3.500 13.500h9" stroke={B} /><path d="M13 16h4v-3" stroke={Y} /></g>],
];

const Star = ({ dot }) => (
  <svg width="18" height="18" viewBox="0 0 18 18" aria-hidden="true">
    <path d="M9 1l2.500 7.500L17 15l-6-1.500L9 16l-2-2.500L1 15l5.500-6.500z" fill="#9ed3f5" />
    {dot && <circle cx="14" cy="13" r="3" fill={Y} />}
  </svg>
);

function StatusBar() {
  return (
    <footer className="flex h-7 shrink-0 items-center border-b-2 border-[#8f949b] bg-[#2f3641] pt-[2px] text-xs text-[#c4cad1]">
      <output className="w-[261px] pl-[10px] pt-[2px] font-['Liberation_Mono',monospace] text-[10px] text-[#eef1f4]">215.8664, 718.2143, 0.0000</output>
      <div className="flex gap-1 pl-[2px]">
        {modes.map(([name, on, icon]) => (
          <button type="button" key={name} aria-label={name} aria-pressed={!!on} className={"flex size-5 items-center justify-center border " + (on ? "border-[#62a8e0] bg-[#41566e]" : "border-transparent")}>
            <Icon s={20}>{icon}</Icon>
          </button>
        ))}
      </div>
      <div className="ml-auto flex w-[272px] items-center">
        <svg width="16" height="14" viewBox="0 0 16 14" fill="none" stroke={B} aria-hidden="true"><path d="M0.500 0v14M15.500 0v14M0 1.500h16M0 12.500h16" /><text x="8" y="10" fontSize="8" textAnchor="middle" fill="#9ed3f5" stroke="none">0.0</text></svg>
        <span className="ml-[3px]">毫米</span>
        <Caret className="ml-1 mr-[8px] text-white" />
        <Star />
        <span className="ml-[2px] font-['Liberation_Mono',monospace] text-[10px]">1:1</span>
        <Caret className="ml-[6px] mr-[8px] text-white" />
        <Star dot />
      </div>
    </footer>
  );
}

/* ---------- dialogs ---------- */

const SONG = "font-['Noto_Sans_CJK_SC',sans-serif] text-xs text-black";

function DlgButton({ children, disabled, primary, className = "h-[22px]" }) {
  return (
    <button
      type="button"
      disabled={disabled}
      className={"flex w-[73px] items-center justify-center whitespace-nowrap leading-4 " + className + " " +
        (disabled ? "border border-[#bfbfbf] bg-[#cccccc] text-[#838383]" : primary ? "border-2 border-[#0078d7] bg-[#e1e1e1]" : "border border-[#adadad] bg-[#e1e1e1]")}
    >
      <span><T>{children}</T></span>
    </button>
  );
}

function PageSetupManager() {
  return (
    <div role="dialog" aria-label="页面设置管理器" className={"w-[480px] bg-[#f0f0f0] " + SONG}>
      <div className="flex h-[30px] items-center justify-between bg-white pl-2 pr-[10px] text-[#969696]">
        <h2>页面设置管理器</h2>
        <button type="button" aria-label="关闭"><Close /></button>
      </div>
      <div className="pb-3 pl-[11px] pr-[10px] pt-[18px] leading-4">
        <p className="flex h-4 pl-[9px]"><span className="w-[78px]"><T>当前布局:</T></span>模型</p>
        <fieldset className="mt-[9px] border border-[#dcdcdc] pb-[6px] pl-3 pr-[15px]">
          <legend className="-ml-[6px] h-4 px-[2px]"><T>页面设置(P)</T></legend>
          <p className="mt-[2px] flex h-4"><span className="w-[107px]"><T>当前页面设置:</T></span><span><T>{"<无>"}</T></span></p>
          <div className="mt-[7px] flex justify-between">
            <ul role="listbox" aria-label="页面设置" className="w-[345px] border border-[#828790] bg-white pl-[6px] pt-[1px]"><li role="option" aria-selected="false"><T>*模型*</T></li></ul>
            <div className="flex flex-col gap-[14px]">
              <DlgButton disabled>置为当前(S)</DlgButton>
              <DlgButton>新建(N)...</DlgButton>
              <DlgButton>修改(M)...</DlgButton>
              <DlgButton disabled>重命名(R)</DlgButton>
              <DlgButton disabled>删除(D)</DlgButton>
              <DlgButton>输入(I)...</DlgButton>
            </div>
          </div>
        </fieldset>
        <fieldset className="mt-2 border border-[#dcdcdc] pb-[17px] pl-3 leading-[18px]">
          <legend className="-ml-[6px] h-[14px] px-[2px] leading-[14px]">选定页面设置的详细信息</legend>
          <dl className="grid grid-cols-[82px_1fr]">
            {[["设备名:", "无"], ["绘图仪:", "无"], ["打印大小:", "215.9 x 279.4 毫米 纵向"], ["位置:", "不可用"], ["说明:", "在选择新的绘图仪配置名称之前，不能打印该布局。"]].map(([a, b]) => (
              <React.Fragment key={a}><dt><T>{a}</T></dt><dd><T>{b}</T></dd></React.Fragment>
            ))}
          </dl>
        </fieldset>
        <div className="mt-[10px] flex items-center pr-4">
          <label className="flex items-center gap-[3px]"><input type="checkbox" className="size-[13px] appearance-none border border-[#333] bg-white" />创建新布局时显示</label>
          <div className="ml-auto flex gap-[19px]"><DlgButton>确定</DlgButton><DlgButton>取消</DlgButton></div>
        </div>
      </div>
    </div>
  );
}

function Arrow({ x1, y1, x2, y2 }) {
  const len = Math.hypot(x2 - x1, y2 - y1);
  const a = (Math.atan2(y2 - y1, x2 - x1) * 180) / Math.PI;
  return (
    <g transform={`translate(${x1} ${y1}) rotate(${a})`}>
      <path d={`M0 -1.500 Q-2 0 0 1.500 L${len - 24} 2 L${len - 26} 7 L${len} 0 L${len - 26} -7 L${len - 24} -2 Z`} fill="#e8141a" stroke="#b30f14" strokeWidth=".5" />
    </g>
  );
}

function NewPageSetup() {
  const items = ["<无>", "<默认输出设备>", "<上一次>", "*模型*"];
  return (
    <div role="dialog" aria-label="新页面设置" className={"relative w-[377px] border border-[#5f5f5f] bg-[#f0f0f0] shadow-md " + SONG}>
      <div className="flex h-[30px] items-center justify-between bg-white pl-2 pr-[9px]">
        <h2>新页面设置</h2>
        <button type="button" aria-label="关闭"><Close /></button>
      </div>
      <div className="pb-[11px] pl-[11px] pr-[10px] pt-[9px] leading-4">
        <label htmlFor="setup-name" className="block h-4"><T>新页面设置名(N):</T></label>
        <input id="setup-name" defaultValue="矩形" className="mt-[10px] block h-[23px] w-full border border-[#0078d7] bg-white px-[2px] pb-1 outline-none" />
        <p id="base-style" className="mt-[14px] h-4 pl-[2px]"><T>基本样式(S):</T></p>
        <ul role="listbox" aria-labelledby="base-style" className="mt-[11px] h-[108px] border border-[#828790] bg-white p-px leading-3">
          {items.map((t, i) => (
            <li key={t} role="option" aria-selected={i === 3} className={"h-3 pl-[2px] " + (i === 3 ? "bg-[#0078d7] text-white" : "")}><T>{t}</T></li>
          ))}
        </ul>
        <div className="mt-3 flex justify-center gap-[84px] pr-[2px]">
          <DlgButton primary className="h-[19px]">确定</DlgButton>
          <DlgButton className="h-[19px]">取消</DlgButton>
        </div>
      </div>
      <svg className="pointer-events-none absolute left-0 top-0 drop-shadow-md" width="375" height="279" aria-hidden="true">
        <Arrow x1={136} y1={47} x2={47} y2={70} />
        <Arrow x1={185} y1={201} x2={127} y2={248} />
      </svg>
    </div>
  );
}

/* ---------- overlays ---------- */

function UploadBadge() {
  return (
    <button type="button" className="absolute right-[51px] top-8 z-10 flex h-8 w-[128px] items-stretch overflow-hidden rounded-lg border border-[#35a3f5] bg-[#eff8ff] text-xs text-[#1c97ea]">
      <span className="flex w-[35px] items-center justify-center bg-[#1292ff]">
        <svg width="22" height="18" viewBox="0 0 22 18" fill="none" stroke="#fff" strokeWidth="2.600" aria-hidden="true"><circle cx="11" cy="5.500" r="4" /><circle cx="5.500" cy="12" r="3.800" /><circle cx="16.500" cy="12" r="3.800" /></svg>
      </span>
      <span className="flex flex-1 items-center justify-center pr-1">拖拽上传</span>
    </button>
  );
}

function Watermarks() {
  return (
    <div className="pointer-events-none absolute bottom-0 right-0 z-10 h-[90px] w-[260px]">
      <div className="whitespace-nowrap text-[#c9ced4]/60">
        <p className="text-xl leading-[26px]">激活 Windows</p>
        <p className="text-[15px] leading-[22px]">转到“设置”以激活 Windows。</p>
      </div>
      <svg className="absolute right-3 top-[18px]" width="192" height="62" viewBox="0 0 192 62" aria-hidden="true">
        <path d="M22 6h20l10 14L78 4c-12 10-18 18-22 24l14 20H50L42 36 24 48 12 62c4-14 14-22 22-30z" fill="#d5dae0" opacity=".75" />
        <path d="M52 42c20-4 24-16 22-26 12 14 2 32-22 30z" fill="#2f8fd8" opacity=".8" />
        <path d="M56 50c16 0 28-8 28-20 6 14-6 26-28 24z" fill="#43a047" opacity=".8" />
        <text x="72" y="44" fontSize="29" fontWeight="900" fill="#a9c0dc" opacity=".9" className="font-['Noto_Sans_CJK_SC',sans-serif]">自由互联</text>
      </svg>
      <div className="absolute bottom-0 right-0 flex h-[19px] w-[104px] items-center justify-between bg-white pl-[16px] pr-[2px] text-[#1672d8]">
        <span className="text-[13px] font-bold leading-4">中</span>
        <span className="text-sm font-bold leading-4">°,</span>
        <svg width="12" height="16" viewBox="0 0 12 16" fill="none" stroke="currentColor" strokeWidth="1.500" aria-hidden="true"><rect x="3.500" y="1" width="5" height="8" rx="2.500" fill="currentColor" /><path d="M1 7c0 6 10 6 10 0M6 12v3" /></svg>
        <svg width="15" height="12" viewBox="0 0 15 12" fill="none" stroke="currentColor" strokeWidth="1.500" aria-hidden="true"><rect x="1" y="1" width="13" height="10" rx="1" /><path d="M3 4h9M3 6.500h9" strokeDasharray="2 1" /><path d="M4 9h7" /></svg>
      </div>
      <svg className="absolute bottom-0 right-[92px]" width="32" height="24" viewBox="0 0 32 24" aria-hidden="true">
        <rect x="2" y="2" width="27" height="24" rx="4" fill="#f4511e" transform="rotate(-5 16 12)" />
        <text x="16" y="20" textAnchor="middle" fontSize="22" fontWeight="bold" fill="#fff" className="font-['Liberation_Sans',sans-serif]">S</text>
      </svg>
      <p className="absolute bottom-[6px] right-3 font-['Liberation_Sans',sans-serif] text-[17px] leading-5 text-[#4caf50]/80">www.xz7.com</p>
    </div>
  );
}

export default function App() {
  return (
    <div className="relative flex h-screen flex-col overflow-hidden border-l border-r-2 border-l-[#8f9aa3] border-r-[#8f8f8f] bg-[#2a303a] font-['Open_Sans','Noto_Sans_CJK_SC',sans-serif]">
      <TitleBar />
      <MenuBar />
      <Toolbars />
      <main className="flex min-h-0 flex-1 gap-[4px] pr-[3px]">
        <div className="flex min-w-0 flex-1 flex-col">
          <DrawingArea />
          <CommandPanel />
        </div>
        <div className="flex min-h-0 gap-[6px] pt-[2px]">
          <Calculator />
          <Properties />
        </div>
      </main>
      <StatusBar />
      <UploadBadge />
      <Watermarks />
      <div className="pointer-events-none absolute inset-0 z-20 grid place-items-center *:pointer-events-auto *:col-start-1 *:row-start-1">
        <PageSetupManager />
        <NewPageSetup />
      </div>
    </div>
  );
}
